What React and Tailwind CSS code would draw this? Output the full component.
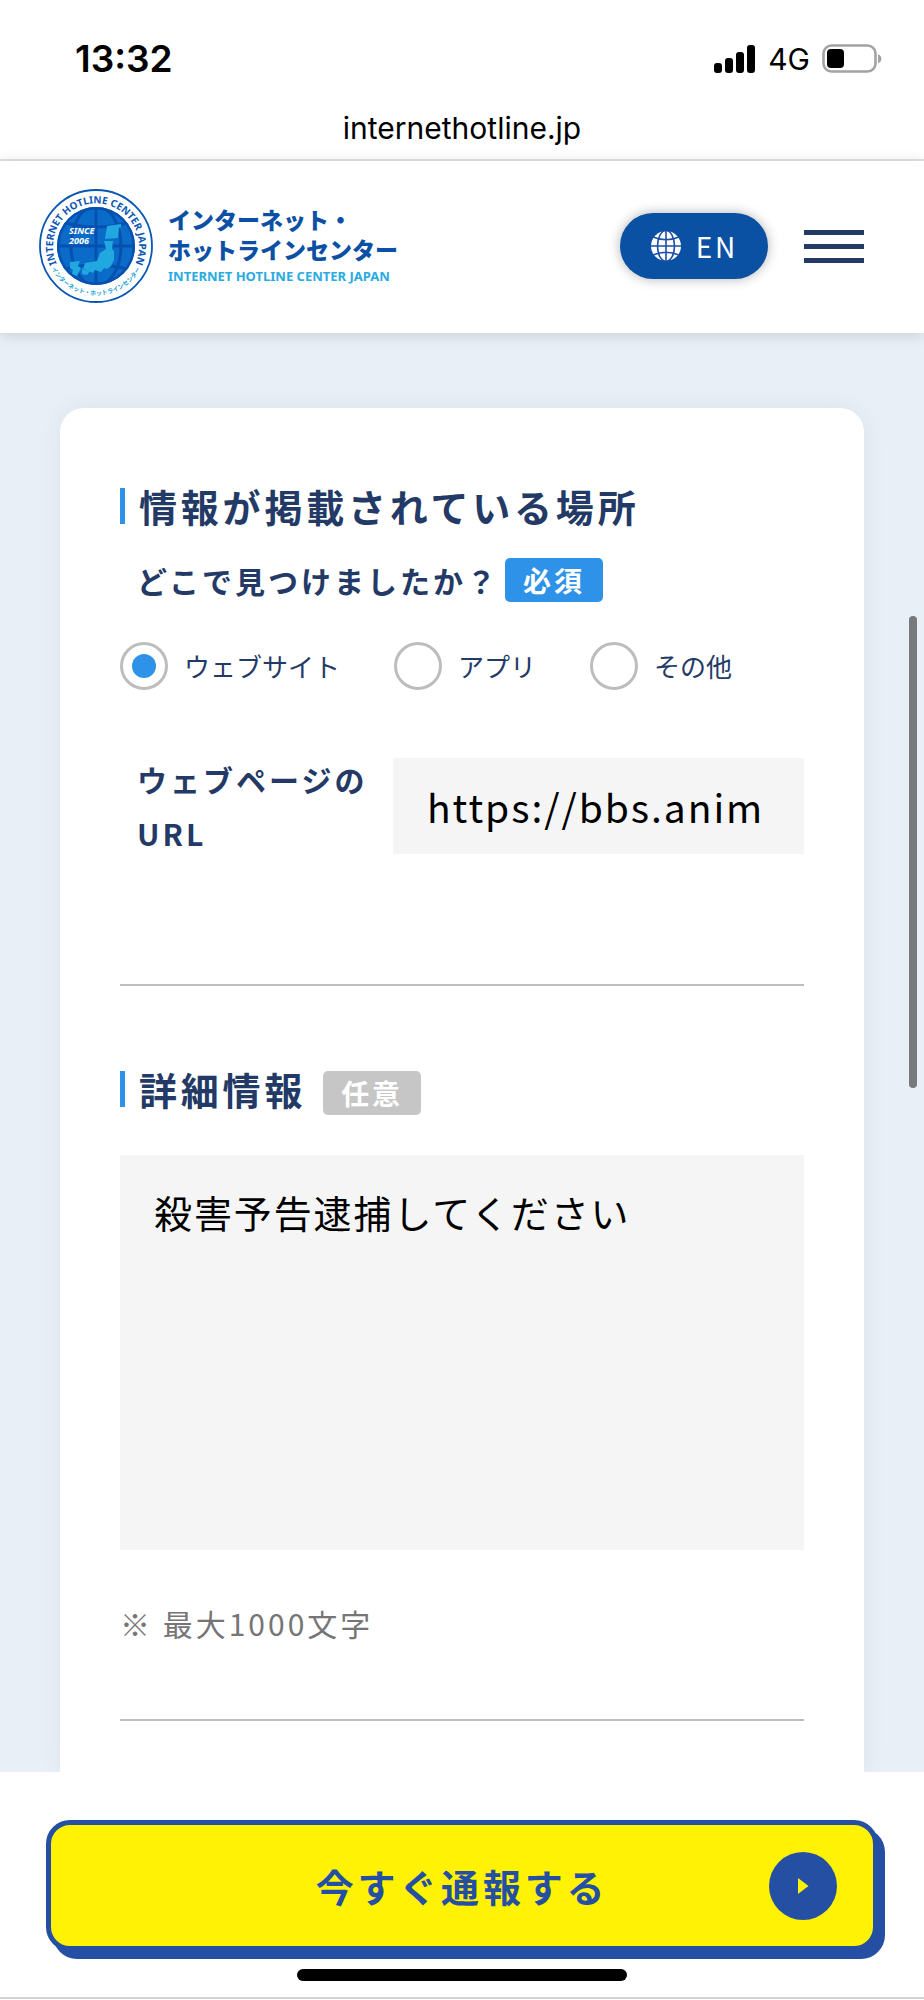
import React, { useState } from "react";

const places = [
  { id: "web", label: "ウェブサイト" },
  { id: "app", label: "アプリ" },
  { id: "other", label: "その他" },
];

function StatusBar() {
  return (
    <div className="border-b-2 border-[#e2e2e2] bg-white font-['Inter',sans-serif] text-black">
      <div className="flex items-center justify-between pt-9 pr-[42px] pl-[75px]">
        <span className="text-[37px] leading-[46px] font-semibold">13:32</span>
        <div className="flex items-center gap-3">
          <svg width="42" height="28" viewBox="0 0 42 28" aria-hidden="true">
            <rect x="0" y="18" width="8" height="10" rx="3" />
            <rect x="11" y="13" width="8" height="15" rx="3" />
            <rect x="22" y="7" width="8" height="21" rx="3" />
            <rect x="33" y="0" width="8" height="28" rx="3" />
          </svg>
          <span className="text-[30px] leading-[46px]">4G</span>
          <svg width="60" height="30" viewBox="0 0 60 30" aria-hidden="true">
            <rect x="1.5" y="1.5" width="52" height="26" rx="8" fill="none" stroke="#a3a3a3" strokeWidth="2.6" />
            <rect x="5" y="5" width="17" height="19" rx="4" />
            <path d="M56 10.500c4.500 1 4.500 7.500 0 8.500z" fill="#a3a3a3" />
          </svg>
        </div>
      </div>
      <p className="pt-6 pb-[9px] text-center text-[30px] leading-[44px]">internethotline.jp</p>
    </div>
  );
}

function Emblem() {
  return (
    <svg width="116" height="116" viewBox="0 0 116 116" className="shrink-0" role="img" aria-label="INTERNET HOTLINE CENTER JAPAN">
      <defs>
        <path id="ringTop" d="M25.500 86.500A43 43 0 1 1 90.500 86.500" />
        <path id="ringBottom" d="M10.500 74A50.500 50.500 0 0 0 105.500 74" />
        <clipPath id="disc">
          <circle cx="58" cy="58" r="39" />
        </clipPath>
      </defs>
      <circle cx="58" cy="58" r="56" fill="#fff" stroke="#0a56b4" strokeWidth="1.800" />
      <circle cx="58" cy="58" r="39" fill="#0a6cc8" />
      <g clipPath="url(#disc)" fill="none" stroke="#0650b0" strokeWidth="3">
        <circle cx="58" cy="58" r="38" />
        <ellipse cx="58" cy="58" rx="25" ry="40" />
        <path d="M58 18v80M18 58h80M24 34q34 10 68 0M24 82q34-10 68 0" />
      </g>
      <g fill="#22a8e0">
        <path d="M69 38l14-2v3l-2 1-1 10-13 1z" />
        <path d="M66 53h9l-1 8 2 2v9l-3 6-4 3-3-1-3 4-6-2-2 3-6-3-4-1 2-6 12-2 3-8 6-4z" />
        <path d="M32 74l10-1-2 5 3 2-4 8-5-2 1-4-3-2zM44 81l8 2-3 4-5-1z" />
      </g>
      <g fill="#fff" fontFamily="Noto Sans, sans-serif" fontWeight="700" fontStyle="italic" fontSize="9">
        <text x="31" y="46">SINCE</text>
        <text x="31" y="56">2006</text>
      </g>
      <text fill="#0a56b4" fontFamily="Noto Sans, sans-serif" fontWeight="700" fontSize="10">
        <textPath href="#ringTop" startOffset="50%" textAnchor="middle">INTERNET HOTLINE CENTER JAPAN</textPath>
      </text>
      <text fill="#18a0dc" fontFamily="Noto Sans CJK JP, sans-serif" fontWeight="700" fontSize="6">
        <textPath href="#ringBottom" startOffset="50%" textAnchor="middle">インターネット・ホットラインセンター</textPath>
      </text>
    </svg>
  );
}

function GlobeIcon() {
  return (
    <svg width="32" height="32" viewBox="0 0 32 32" aria-hidden="true">
      <circle cx="16" cy="16" r="15" fill="#fff" />
      <g fill="none" stroke="#1d4ea6" strokeWidth="1.600">
        <ellipse cx="16" cy="16" rx="8.500" ry="15.500" />
        <path d="M16 0v32M0 16h32M3 7q13 5.500 26 0M3 25q13-5.500 26 0" />
      </g>
    </svg>
  );
}

function Header() {
  return (
    <header className="relative flex items-center justify-between bg-white pt-[27px] pr-[60px] pb-[29px] pl-[38px] shadow-[0_2px_14px_rgba(0,0,0,0.14)]">
      <a href="#top" className="flex items-center gap-[14px]">
        <Emblem />
        <span className="block">
          <span className="block text-[23px] leading-[30px] font-black text-[#0b50a4]">
            インターネット・
            <br />
            ホットラインセンター
          </span>
          <span className="block font-['Noto_Sans',sans-serif] text-[13px] leading-6 font-bold text-[#29abe2]">
            INTERNET HOTLINE CENTER JAPAN
          </span>
        </span>
      </a>
      <div className="flex items-center gap-9">
        <button
          type="button"
          className="flex h-[66px] w-[148px] items-center justify-center gap-[14px] rounded-full bg-[#0a50a3] text-[28px] tracking-widest text-white shadow-[0_0_12px_rgba(0,0,0,0.3)]"
        >
          <GlobeIcon />
          EN
        </button>
        <button type="button" aria-label="メニュー" className="flex w-[60px] flex-col gap-[9px]">
          <span className="h-[5px] w-full bg-[#243a66]" />
          <span className="h-[5px] w-full bg-[#243a66]" />
          <span className="h-[5px] w-full bg-[#243a66]" />
        </button>
      </div>
    </header>
  );
}

function SectionTitle({ children }) {
  return (
    <h2 className="flex items-center gap-[14px] text-[38px] leading-[52px] font-bold tracking-widest">
      <span className="h-9 w-[5px] bg-[#2e92e8]" />
      {children}
    </h2>
  );
}

export default function App() {
  const [place, setPlace] = useState("web");
  const [url, setUrl] = useState("https://bbs.anim");
  const [detail, setDetail] = useState("殺害予告逮捕してください");

  return (
    <div lang="ja" className="relative bg-[#e8eff6] font-['Noto_Sans_CJK_JP',sans-serif] text-[#243a66]">
      <StatusBar />
      <Header />

      <main className="px-[60px] pt-[75px]">
        <form className="rounded-t-3xl bg-white px-[60px] pt-[72px] pb-[51px] shadow-[0_0_24px_rgba(0,0,0,0.06)]">
          <SectionTitle>情報が掲載されている場所</SectionTitle>

          <fieldset>
            <legend className="flex items-center gap-[6px] pt-[26px] pl-[17px]">
              <span className="text-[30px] leading-[44px] font-bold tracking-widest">どこで見つけましたか？</span>
              <span className="rounded-[5px] bg-[#2e92e8] px-[18px] text-[28px] leading-[44px] font-bold tracking-widest text-white">
                必須
              </span>
            </legend>
            <div className="mt-10 flex items-center gap-[54px]">
              {places.map((p) => (
                <label key={p.id} className="flex items-center gap-4 text-[26px] leading-[48px]">
                  <input
                    type="radio"
                    name="place"
                    checked={place === p.id}
                    onChange={() => setPlace(p.id)}
                    className="grid size-12 appearance-none place-items-center rounded-full border-[3px] border-[#bdbdbd] before:size-6 before:rounded-full checked:before:bg-[#2e92e8]"
                  />
                  {p.label}
                </label>
              ))}
            </div>
          </fieldset>

          <div className="mt-[62px] flex items-center justify-between pl-[17px]">
            <label htmlFor="url" className="text-[30px] leading-[54px] font-bold tracking-widest">
              ウェブページの
              <br />
              URL
            </label>
            <input
              id="url"
              type="text"
              value={url}
              onChange={(e) => setUrl(e.target.value)}
              className="h-24 w-[62%] max-w-[411px] bg-[#f5f5f5] px-[34px] text-[39px] tracking-wider text-black outline-none"
            />
          </div>

          <hr className="mt-[124px] border-t-2 border-[#bdbdbd]" />

          <div className="mt-[77px] flex items-end gap-[17px]">
            <SectionTitle>
              <label htmlFor="detail">詳細情報</label>
            </SectionTitle>
            <span className="rounded-[5px] bg-[#c6c6c6] px-[18px] text-[28px] leading-[44px] font-bold tracking-widest text-white">
              任意
            </span>
          </div>
          <textarea
            id="detail"
            maxLength={1000}
            value={detail}
            onChange={(e) => setDetail(e.target.value)}
            className="mt-10 block h-[395px] w-full resize-none bg-[#f5f5f5] px-[34px] py-[29px] text-[38px] leading-[56px] tracking-wider text-black outline-none"
          />
          <p className="mt-[53px] text-[30px] leading-10 tracking-widest text-[#757575]">※ 最大1000文字</p>

          <hr className="mt-[76px] border-t-2 border-[#bdbdbd]" />
        </form>
      </main>

      <footer className="relative border-b-2 border-[#d4d4d4] bg-white pt-12 pb-4">
        <div className="px-[46px]">
          <button
            type="button"
            className="relative flex h-[131px] w-full items-center justify-center rounded-[24px] border-[5px] border-[#244fa3] bg-[#fff205] text-[38px] font-bold tracking-widest text-[#244fa3] shadow-[7px_8px_0_#244fa3]"
          >
            今すぐ通報する
            <span className="absolute top-1/2 right-9 flex size-[68px] -translate-y-1/2 items-center justify-center rounded-full bg-[#244fa3]">
              <svg width="12" height="16" viewBox="0 0 12 16" aria-hidden="true">
                <path d="M1 0l10.500 8L1 16z" fill="#fff205" />
              </svg>
            </span>
          </button>
        </div>
        <div className="mx-auto mt-[18px] h-3 w-[330px] rounded-full bg-black" />
      </footer>

      <div className="absolute top-[616px] right-[7px] h-[472px] w-2 rounded-full bg-[#77797c]" />
    </div>
  );
}
